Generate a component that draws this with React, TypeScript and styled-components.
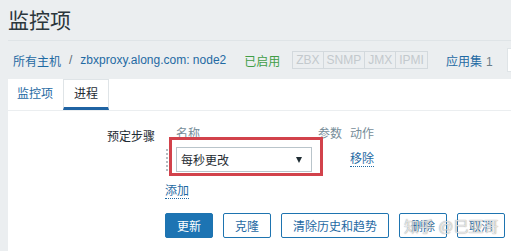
import * as React from "react"
import styled, { createGlobalStyle } from "styled-components"

const GlobalStyle = createGlobalStyle`
  html, body {
    margin: 0;
    padding: 0;
    background: #ebeef0;
    overflow: hidden;
  }
  body {
    font-family: "Liberation Sans", Arial, "Noto Sans CJK SC", sans-serif;
    font-size: 12px;
    color: #1f2c33;
  }
`

const Page = styled.div`
  box-sizing: border-box;
  width: 100%;
  height: 251px;
  overflow: hidden;
  padding-left: 8px;
`

const Header = styled.header`
  height: 40px;
  border-bottom: 1px solid #dfe4e7;
`

const Title = styled.h1`
  margin: 0;
  padding-top: 8px;
  font-size: 21px;
  line-height: 26px;
  font-weight: normal;
  color: #2b363c;
`

const Nav = styled.nav`
  height: 38px;
  display: flex;
  align-items: center;
  padding-left: 5px;
  white-space: nowrap;
`

const NavLink = styled.a`
  color: #1f6aa3;
  text-decoration: none;
  flex-shrink: 0;
`

const Sep = styled.span`
  margin: 0 8px;
  color: #5c6c75;
`

const Status = styled.span`
  margin-left: 18px;
  color: #429e47;
`

const Avail = styled.div`
  margin-left: 12px;
  display: flex;
  flex-shrink: 0;
  height: 16px;
  border: 1px solid #d3d9dd;
`

const AvailItem = styled.span`
  padding: 0 3px;
  line-height: 16px;
  font-size: 12px;
  color: #c3c9cd;
  & + & {
    border-left: 1px solid #d3d9dd;
  }
`

const AppLink = styled(NavLink)`
  margin-left: 18px;
`

const Count = styled.span`
  margin-left: 4px;
  color: #6b7d87;
`

const NavBox = styled.div`
  flex-shrink: 0;
  margin-left: 14px;
  width: 80px;
  height: 22px;
  background: #fff;
  border: 1px solid #dfe4e7;
`

const Panel = styled.section`
  background: #fff;
  height: 172px;
`

const TabList = styled.div`
  display: flex;
  height: 31px;
  border-bottom: 1px solid #ebeef0;
`

const Tab = styled.div<{ $active?: boolean }>`
  box-sizing: border-box;
  height: 31px;
  padding: 0 ${(p) => (p.$active ? "10px" : "9px")};
  line-height: ${(p) => (p.$active ? "28px" : "31px")};
  color: ${(p) => (p.$active ? "#1f2c33" : "#1f6aa3")};
  border: ${(p) => (p.$active ? "1px solid #dfe4e7" : "none")};
  border-bottom: ${(p) => (p.$active ? "3px solid #1f63a3" : "none")};
  margin-left: ${(p) => (p.$active ? "1px" : "0")};
`

const Form = styled.div`
  padding-top: 15px;
`

const FormRow = styled.div`
  display: flex;
  align-items: flex-start;
`

const Label = styled.div`
  width: 147px;
  margin-right: 10px;
  padding-top: 3px;
  line-height: 16px;
  text-align: right;
`

const Steps = styled.div`
  display: grid;
  grid-template-columns: 11px 142px 32px auto;
  align-items: center;
`

const ColHead = styled.div`
  line-height: 16px;
  color: #768d99;
`

const StepCell = styled.div`
  margin-top: 5px;
  height: 25px;
  display: flex;
  align-items: center;
`

const Handle = styled.div`
  margin-left: 1px;
  width: 0;
  height: 22px;
  border-left: 2px dotted #b4bcc1;
`

const SelectWrap = styled.div`
  position: relative;
`

const Select = styled.div`
  box-sizing: border-box;
  width: 136px;
  height: 25px;
  padding: 0 9px 0 4px;
  display: flex;
  align-items: center;
  justify-content: space-between;
  border: 1px solid #b9c4ca;
  background: #fff;
`

const Arrow = styled.span`
  width: 0;
  height: 0;
  border-left: 3px solid transparent;
  border-right: 3px solid transparent;
  border-top: 6px solid #1f2c33;
`

const Highlight = styled.div`
  position: absolute;
  top: -10px;
  left: -7px;
  right: -11px;
  bottom: -4px;
  border: 3px solid #d2424b;
  pointer-events: none;
`

const DotLink = styled.a`
  color: #1f6aa3;
  text-decoration: none;
  border-bottom: 1px dotted #1f6aa3;
  line-height: 14px;
`

const AddCell = styled.div`
  grid-column: 1 / -1;
  margin-top: 11px;
  line-height: 16px;
`

const Buttons = styled.div`
  position: relative;
  margin: 14px 0 0 157px;
  display: flex;
  gap: 10px;
`

const Button = styled.button<{ $primary?: boolean }>`
  box-sizing: border-box;
  height: 25px;
  padding: 0 11px;
  font: inherit;
  border-radius: 2px;
  border: 1px solid #1e74b0;
  background: ${(p) => (p.$primary ? "#1d74b3" : "#fff")};
  color: ${(p) => (p.$primary ? "#fff" : "#1f6aa3")};
`

const Watermark = styled.div`
  position: absolute;
  left: 239px;
  top: 5px;
  font-size: 15px;
  line-height: 18px;
  white-space: nowrap;
  color: rgba(255, 255, 255, 0.75);
  text-shadow: 0 0 1px rgba(60, 60, 60, 0.7);
  pointer-events: none;
`

export default function App() {
  return (
    <Page>
      <GlobalStyle />
      <Header>
        <Title>监控项</Title>
      </Header>
      <Nav>
        <NavLink>所有主机</NavLink>
        <Sep>/</Sep>
        <NavLink>zbxproxy.along.com: node2</NavLink>
        <Status>已启用</Status>
        <Avail>
          {["ZBX", "SNMP", "JMX", "IPMI"].map((t) => (
            <AvailItem key={t}>{t}</AvailItem>
          ))}
        </Avail>
        <AppLink>
          应用集<Count>1</Count>
        </AppLink>
        <NavBox />
      </Nav>
      <Panel>
        <TabList>
          <Tab>监控项</Tab>
          <Tab $active>进程</Tab>
        </TabList>
        <Form>
          <FormRow>
            <Label>预定步骤</Label>
            <Steps>
              <div />
              <ColHead>名称</ColHead>
              <ColHead>参数</ColHead>
              <ColHead>动作</ColHead>
              <StepCell>
                <Handle />
              </StepCell>
              <StepCell>
                <SelectWrap>
                  <Select>
                    <span>每秒更改</span>
                    <Arrow />
                  </Select>
                  <Highlight />
                </SelectWrap>
              </StepCell>
              <StepCell />
              <StepCell>
                <DotLink>移除</DotLink>
              </StepCell>
              <AddCell>
                <DotLink>添加</DotLink>
              </AddCell>
            </Steps>
          </FormRow>
          <Buttons>
            <Button $primary>更新</Button>
            <Button>克隆</Button>
            <Button>清除历史和趋势</Button>
            <Button>删除</Button>
            <Button>取消</Button>
            <Watermark>知乎 @巳亚哥</Watermark>
          </Buttons>
        </Form>
      </Panel>
    </Page>
  )
}
